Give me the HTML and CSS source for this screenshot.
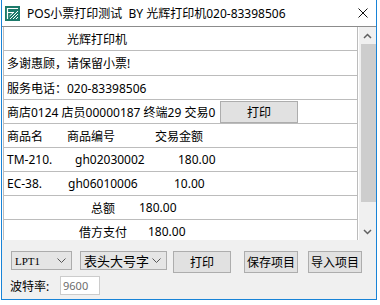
FILE: index.html
```html
<!DOCTYPE html>
<html lang="zh-CN">
<head>
    <meta charset="UTF-8">
    <title>POS小票打印测试</title>
    <link rel="stylesheet" href="styles.css">
</head>
<body>
    <div class="window">
        <div class="titlebar">
            <svg class="app-icon" width="15" height="15" viewBox="0 0 15 15">
                <rect x="0" y="0" width="15" height="15" fill="#1d7a6b"/>
                <path d="M2 2.5H13M2.5 2V13M2 6.5H9" stroke="#fff" stroke-width="1.2" fill="none"/>
                <path d="M5 13L13 5M8 13L13 8M11 13L13 11M4.5 10L9 6" stroke="#fff" stroke-width="1" fill="none"/>
            </svg>
            <span class="title">POS小票打印测试&nbsp;&nbsp;BY 光辉打印机020-83398506</span>
            <svg class="close" width="10" height="10" viewBox="0 0 10 10">
                <path d="M0.5 0.5L9.5 9.5M9.5 0.5L0.5 9.5" stroke="#111" stroke-width="1" fill="none"/>
            </svg>
        </div>

        <div class="listbox">
            <div class="rows">
                <div class="row row-shop">光辉打印机</div>
                <div class="row row-tall">多谢惠顾，请保留小票!</div>
                <div class="row">服务电话：020-83398506</div>
                <div class="row">
                    <span class="term-text">商店0124 店员00000187 终端29 交易0</span>
                    <button class="row-btn">打印</button>
                </div>
                <div class="row row-grid row-head">
                    <span>商品名</span><span>商品编号</span><span>交易金额</span>
                </div>
                <div class="row row-grid row-item-a">
                    <span>TM-210.</span><span>gh02030002</span><span>180.00</span>
                </div>
                <div class="row row-grid row-item-b">
                    <span>EC-38.</span><span>gh06010006</span><span>10.00</span>
                </div>
                <div class="row row-grid row-sum">
                    <span>总额</span><span>180.00</span>
                </div>
                <div class="row row-grid row-paid">
                    <span>借方支付</span><span>180.00</span>
                </div>
            </div>
            <div class="scrollbar">
                <div class="sb-arrow">
                    <svg width="9" height="6" viewBox="0 0 9 6"><path d="M1 5L4.5 1.5L8 5" stroke="#606060" stroke-width="1.5" fill="none"/></svg>
                </div>
                <div class="sb-track"><div class="sb-thumb"></div></div>
                <div class="sb-arrow">
                    <svg width="9" height="6" viewBox="0 0 9 6"><path d="M1 1L4.5 4.5L8 1" stroke="#606060" stroke-width="1.5" fill="none"/></svg>
                </div>
            </div>
        </div>

        <div class="controls">
            <div class="control-line">
                <div class="select select-port">
                    <span>LPT1</span>
                    <svg width="9" height="5" viewBox="0 0 9 5"><path d="M0.5 0.5L4.5 4.5L8.5 0.5" stroke="#555" stroke-width="1" fill="none"/></svg>
                </div>
                <div class="select select-font">
                    <span>表头大号字</span>
                    <svg width="9" height="5" viewBox="0 0 9 5"><path d="M0.5 0.5L4.5 4.5L8.5 0.5" stroke="#555" stroke-width="1" fill="none"/></svg>
                </div>
                <button class="btn btn-print">打印</button>
                <button class="btn btn-save">保存项目</button>
                <button class="btn btn-import">导入项目</button>
            </div>
            <div class="control-line">
                <label class="baud-label" for="baud">波特率:</label>
                <input class="baud-input" id="baud" type="text" value="9600" disabled>
            </div>
        </div>
    </div>
</body>
</html>
```

FILE: styles.css
```css
body {
    margin: 0;
    background: #fff;
    font-family: "Noto Sans", "Noto Sans CJK SC", sans-serif;
    font-size: 12px;
    color: #000;
}

.window {
    margin-left: 1px;
    width: 376px;
    height: 300px;
    box-sizing: border-box;
    border: 1px solid #1883d7;
    border-top: none;
    display: flex;
    flex-direction: column;
}

/* title bar */
.titlebar {
    height: 26px;
    flex-shrink: 0;
    display: flex;
    align-items: center;
    padding-left: 3px;
    background: #fff;
}

.app-icon {
    flex-shrink: 0;
}

.title {
    margin-left: 7px;
    white-space: nowrap;
}

.close {
    margin-left: auto;
    margin-right: 8px;
}

/* list of receipt lines */
.listbox {
    height: 213px;
    flex-shrink: 0;
    border-top: 1px solid #8c8c8c;
    display: flex;
    overflow: hidden;
    background: #fff;
}

.rows {
    width: 355px;
    margin-left: 1px;
    box-sizing: border-box;
    border-left: 1px solid #bcbcbc;
    border-right: 1px solid #bcbcbc;
    flex-shrink: 0;
}

.row {
    height: 24px;
    box-sizing: border-box;
    border-bottom: 1px solid #bcbcbc;
    display: flex;
    align-items: center;
    padding-left: 3px;
    white-space: nowrap;
}

.row-tall {
    height: 25px;
}

.row-shop {
    padding-left: 63px;
}

.term-text {
    width: 213px;
    flex-shrink: 0;
}

.row-btn {
    width: 78px;
    height: 22px;
    padding: 0;
    border: 1px solid #adadad;
    background: #e1e1e1;
    font: inherit;
    color: #000;
}

.row-grid {
    display: grid;
    align-items: center;
}

.row-head {
    grid-template-columns: 60px 88px auto;
}

.row-item-a {
    grid-template-columns: 68px 103px auto;
}

.row-item-b {
    grid-template-columns: 61px 106px auto;
}

.row-sum {
    padding-left: 87px;
    grid-template-columns: 48px auto;
}

.row-paid {
    padding-left: 75px;
    grid-template-columns: 69px auto;
}

/* scrollbar */
.scrollbar {
    width: 17px;
    margin-left: auto;
    background: #f0f0f0;
    display: flex;
    flex-direction: column;
}

.sb-arrow {
    height: 17px;
    flex-shrink: 0;
    display: flex;
    align-items: center;
    justify-content: center;
}

.sb-track {
    flex: 1;
}

.sb-thumb {
    height: 158px;
    margin-left: 2px;
    background: #cdcdcd;
}

/* bottom controls */
.controls {
    flex: 1;
    background: #f0f0f0;
    padding: 11px 0 0 9px;
}

.control-line {
    display: flex;
    align-items: flex-start;
}

.control-line + .control-line {
    margin-top: 3px;
    align-items: center;
}

.select {
    height: 19px;
    box-sizing: border-box;
    border: 1px solid #acacac;
    background: #e5e5e5;
    display: flex;
    align-items: center;
    justify-content: space-between;
    padding: 0 5px 0 3px;
}

.select-port {
    width: 61px;
    font-family: "Liberation Serif", serif;
    font-size: 11px;
}

.select-font {
    width: 87px;
    margin-left: 8px;
    font-size: 13px;
}

.btn {
    height: 22px;
    padding: 0;
    border: 1px solid #adadad;
    background: #e1e1e1;
    font: inherit;
    color: #000;
}

.btn-print {
    width: 58px;
    margin-left: 6px;
}

.btn-save {
    width: 54px;
    margin-left: 13px;
}

.btn-import {
    width: 54px;
    margin-left: 10px;
}

.baud-label {
    margin-left: -1px;
    width: 50px;
}

.baud-input {
    width: 40px;
    height: 19px;
    box-sizing: border-box;
    margin: 0;
    padding: 0 2px;
    border: 1px solid #cccccc;
    background: #fff;
    color: #6d6d6d;
    font-family: "Noto Sans", sans-serif;
    font-size: 11px;
}
```
